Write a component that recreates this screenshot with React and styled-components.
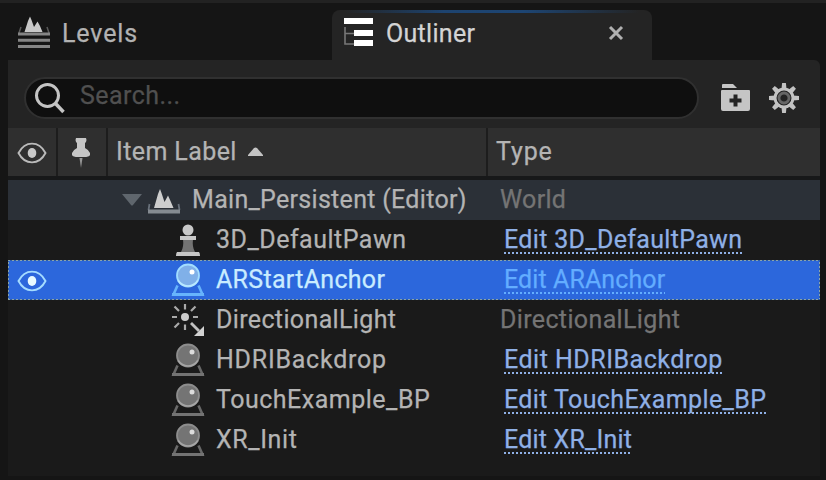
import React from "react";
import styled, { createGlobalStyle } from "styled-components";

const GlobalStyle = createGlobalStyle`
  * { box-sizing: border-box; }
  body { margin: 0; background: #151515; overflow: hidden; }
`;

const Window = styled.main`
  width: 826px;
  height: 480px;
  padding: 0 6px 4px 8px;
  border-top: 3px solid #222222;
  background: #151515;
  color: #b4b4b4;
  font: 400 25px/30px Roboto, sans-serif;
  -webkit-text-stroke: 0.25px currentColor;
  display: flex;
  flex-direction: column;
`;

const TabBar = styled.nav`
  display: flex;
  align-items: flex-end;
  height: 57px;
  flex: none;
`;

const Tab = styled.div`
  display: flex;
  align-items: center;
  width: ${(p) => (p.$active ? 320 : 324)}px;
  height: 50px;
  padding: ${(p) => (p.$active ? "0 28px 4px 12px" : "0 10px 4px 9px")};
  border-radius: 8px 8px 0 0;
  color: ${(p) => (p.$active ? "#d4d4d4" : "#b2b2b2")};
  background: ${(p) =>
    p.$active
      ? "linear-gradient(90deg, #242424 4%, #1d436f 35%, #1d4573 60%, #242424 96%) top / 100% 3px no-repeat, #242424"
      : "transparent"};
`;

const Label = styled.span`
  white-space: pre;
  letter-spacing: ${(p) => p.$spacing || 0}px;
`;

const TabLabel = styled(Label)`
  flex: 1;
  margin-left: ${(p) => p.$gap}px;
  padding-top: 2px;
`;

const Panel = styled.section`
  flex: 1;
  display: flex;
  flex-direction: column;
  background: #1a1a1a;
  border-radius: 0 6px 0 0;
  overflow: hidden;
`;

const Toolbar = styled.div`
  height: 68px;
  flex: none;
  display: flex;
  align-items: center;
  padding: 8px 18px 0 16px;
  background: #242424;
`;

const SearchBox = styled.div`
  width: 675px;
  height: 42px;
  border: 2px solid #303030;
  border-radius: 21px;
  background: #0f0f0f;
  color: #505050;
  display: flex;
  align-items: center;
  padding: 0 0 1px 8px;
  margin-right: 22px;
`;

const SearchText = styled(Label)`
  margin-left: 14px;
  padding-bottom: 3px;
`;

const ToolIcon = styled.span`
  display: flex;
  margin-right: ${(p) => p.$gap || 0}px;
`;

const Columns = styled.div`
  display: grid;
  grid-template-columns: 50px 50px 380px 332px;
`;

const Header = styled(Columns)`
  height: 52px;
  flex: none;
  background: #2f2f2f;
  border-bottom: 4px solid #171819;
`;

const HeaderCell = styled.div`
  display: flex;
  align-items: center;
  padding: ${(p) => (p.$icon ? 2 : 0)}px 0 0 ${(p) => p.$inset}px;
  border-right: ${(p) => (p.$last ? 0 : 2)}px solid #1d1d1d;
`;

const SortArrow = styled.span`
  display: flex;
  margin-left: 11px;
`;

const Row = styled(Columns)`
  height: 40px;
  color: ${(p) => (p.$selected ? "#c9ecff" : "#b4b4b4")};
  background: ${(p) => (p.$selected ? "#2c67dc" : p.$world ? "#2b3037" : "transparent")};
  ${(p) => p.$selected && `
    background:
      repeating-linear-gradient(90deg, #8ba4a8 0 2px, #2c5cab 2px 4px) top / 100% 1px no-repeat,
      repeating-linear-gradient(90deg, #8ba4a8 0 2px, #2c5cab 2px 4px) bottom / 100% 1px no-repeat,
      repeating-linear-gradient(0deg, #8ba4a8 0 2px, #2c5cab 2px 4px) left / 1px 100% no-repeat,
      repeating-linear-gradient(0deg, #8ba4a8 0 2px, #2c5cab 2px 4px) right / 1px 100% no-repeat,
      #2c67dc;
  `}
`;

const VisibilityCell = styled.div`
  display: flex;
  align-items: center;
  padding: 2px 0 0 9px;
`;

const ItemCell = styled.div`
  grid-column: 3;
  display: flex;
  align-items: center;
  padding: 0 0 0 ${(p) => (p.$world ? 13 : 62)}px;
`;

const ItemLabel = styled(Label)`
  padding-bottom: 1px;
`;

const ItemIcon = styled.span`
  display: flex;
  width: 36px;
  height: 36px;
  margin-right: 10px;
`;

const Disclosure = styled.span`
  display: flex;
  width: 22px;
  margin-right: 3px;
`;

const TypeCell = styled.div`
  display: flex;
  align-items: center;
  padding: 0 0 1px ${(p) => (p.$link ? 16 : 12)}px;
  color: #747474;
`;

const TypeLink = styled.a`
  white-space: pre;
  letter-spacing: ${(p) => p.$spacing || 0}px;
  color: ${(p) => (p.$selected ? "#63adff" : "#8fb0e6")};
  line-height: 28px;
  margin-top: 1px;
  background: repeating-linear-gradient(90deg, currentColor 0 2px, transparent 2px 4px) bottom / 100% 2px no-repeat;
`;

const LevelsIcon = () => (
  <svg width="34" height="34" viewBox="0 0 34 34">
    <path d="M7.500 16 11 5 13 0.500 14.500 4 17 11 20.500 5.500 23 10 25.500 16Z" fill="#c8c8c8" />
    <path d="M4 11 2 17M30 11 32 17" fill="none" stroke="#5a5a5a" strokeWidth="1.500" />
    <path d="M1 18H33M1 24.200H33M1 30.400H33" stroke="#858585" strokeWidth="3" />
  </svg>
);

const OutlinerIcon = () => (
  <svg width="29" height="30" viewBox="0 0 29 30">
    <path d="M1 9V26H10M1 15.500H10" fill="none" stroke="#777" strokeWidth="1.600" />
    <path d="M0 0H29V6H0ZM10 12H29V18H10ZM10 22H29V28H10Z" fill="#fff" />
  </svg>
);

const CloseIcon = () => (
  <svg width="16" height="18" viewBox="0 0 16 18">
    <path d="M2 3 14 15M14 3 2 15" stroke="#b0b0b0" strokeWidth="3" />
  </svg>
);

const SearchIcon = () => (
  <svg width="32" height="32" viewBox="0 0 32 32" fill="none" stroke="#c4c4c4">
    <circle cx="13.500" cy="13.500" r="11" strokeWidth="3" />
    <path d="m21.500 21.500 8 8.500" strokeWidth="3.500" />
  </svg>
);

const FolderAddIcon = () => (
  <svg width="29" height="28" viewBox="0 0 29 28">
    <path d="M1 4V1Q1 0 2 0H12L16 4ZM1 6H28Q29 6 29 7V25Q29 27 27 27H2Q0 27 0 25V7Q0 6 1 6Z" fill="#c5c5c5" />
    <path d="M14.500 10.500V22.500M8.500 16.500H20.500" stroke="#242424" strokeWidth="4" />
  </svg>
);

const GearIcon = () => (
  <svg width="32" height="32" viewBox="-17 -16 32 32">
    {[0, 45, 90, 135, 180, 225, 270, 315].map((angle) => (
      <path key={angle} d="M-2.500-9 -1.900-15H1.900L2.500-9Z" fill="#c2c2c2" transform={`rotate(${angle})`} />
    ))}
    <circle r="9" fill="#242424" stroke="#c2c2c2" strokeWidth="3" />
    <circle r="5" fill="#242424" stroke="#666" strokeWidth="2.800" />
  </svg>
);

const EyeIcon = ({ color = "#bababa", pupil = "#c8c8c8" }) => (
  <svg width="30" height="22" viewBox="0 0 30 22">
    <path d="M1.500 11C8-1.500 22-1.500 28.500 11 22 23.500 8 23.500 1.500 11Z" fill="none" stroke={color} strokeWidth="1.900" />
    <ellipse cx="15" cy="11" rx="4.300" ry="4.900" fill={pupil} />
  </svg>
);

const PinIcon = () => (
  <svg width="18" height="32" viewBox="0 0 18 32">
    <path d="M4 1H14Q15 3 14 5L13 6V11Q17 13 18 16V18Q17 20 12 20H6Q1 20 0 18V16Q1 13 5 11V6L4 5Q3 3 4 1Z" fill="#c6c6c6" />
    <path d="M7.500 21H10.500L9 31Z" fill="#969696" />
  </svg>
);

const UpArrow = () => (
  <svg width="15" height="10" viewBox="0 0 15 10">
    <path d="M0 8 6 1Q7.500 0 9 1L15 8V9H0Z" fill="#c4c4c4" />
  </svg>
);

const DownArrow = () => (
  <svg width="22" height="14" viewBox="0 0 22 14">
    <path d="M1 1H21L12 12Q11 13 10 12Z" fill="#5f666d" />
  </svg>
);

const WorldIcon = () => (
  <svg width="36" height="36" viewBox="0 0 36 36">
    <path d="M8 26 12 12 14 7 15.500 11 18.500 20 22 13.500 24.500 19 27.500 26Z" fill="#cdcdcd" />
    <path d="M3.500 22 2.500 28M32.500 22 33.500 28" stroke="#68707a" strokeWidth="1.800" />
    <path d="M2 27.500H34V31.500H2Z" fill="#858b91" />
  </svg>
);

const PawnIcon = () => (
  <svg width="36" height="36" viewBox="0 0 36 36">
    <path d="M13 17H23Q22 25 25 30H11Q14 25 13 17Z" fill="#737373" />
    <circle cx="18" cy="8" r="5.500" fill="#c7c7c7" />
    <path d="M10 14H26V18H10ZM7 30H29Q30 31 30 34H6Q6 31 7 30Z" fill="#c7c7c7" />
  </svg>
);

const ActorIcon = ({ selected }) => (
  <svg width="36" height="36" viewBox="0 0 36 36">
    <path d="M7.500 23.500 3.500 32.500H32.500L28.500 23.500" fill="none" stroke={selected ? "#67b4fc" : "#696969"} strokeWidth="2.600" />
    <path d="M2 31H34V34H2Z" fill={selected ? "#67b4fc" : "#737373"} />
    <circle cx="18" cy="13.500" r="11" fill={selected ? "#80b0e8" : "#747474"} stroke={selected ? "#a2ddff" : "#8d8d8d"} strokeWidth="1.800" />
    <path d="M8 18.500Q12 24 18 24T28 18.500" fill="none" stroke={selected ? "#b8e8ff" : "#a5a5a5"} strokeWidth="1.700" />
    <circle cx="22" cy="10" r="2.500" fill={selected ? "#fff" : "#dddddd"} />
  </svg>
);

const LightIcon = () => (
  <svg width="36" height="36" viewBox="0 0 36 36">
    <circle cx="15" cy="15" r="4" fill="#cdcdcd" />
    <path d="M15 2V7.500M15 22.500V28M2 15H7M23 15H28M4.500 4.500 9 9M25.500 4.500 21 9M4.500 25.500 9 21" stroke="#aaa" strokeWidth="2.200" />
    <path d="M21 21 29 29" stroke="#c2c2c2" strokeWidth="2.800" />
    <path d="M34 24V34H24Z" fill="#d2d2d2" />
  </svg>
);

const icons = { world: WorldIcon, pawn: PawnIcon, actor: ActorIcon, light: LightIcon };

const items = [
  { name: "Main_Persistent (Editor)", nameSpacing: 0.3, type: "World", typeSpacing: 0.3, icon: "world" },
  { name: "3D_DefaultPawn", nameSpacing: 0.5, type: "Edit 3D_DefaultPawn", typeSpacing: 0.33, icon: "pawn", link: true },
  { name: "ARStartAnchor", nameSpacing: 0.3, type: "Edit ARAnchor", typeSpacing: 0.1, icon: "actor", link: true, selected: true },
  { name: "DirectionalLight", nameSpacing: 0.36, type: "DirectionalLight", typeSpacing: 0.36, icon: "light" },
  { name: "HDRIBackdrop", nameSpacing: 0.75, type: "Edit HDRIBackdrop", typeSpacing: 0.5, icon: "actor", link: true },
  { name: "TouchExample_BP", nameSpacing: 0.5, type: "Edit TouchExample_BP", typeSpacing: 0.38, icon: "actor", link: true },
  { name: "XR_Init", nameSpacing: 0.6, type: "Edit XR_Init", typeSpacing: 0.2, icon: "actor", link: true },
];

function OutlinerRow({ item }) {
  const Icon = icons[item.icon];
  const world = item.icon === "world";
  return (
    <Row $world={world} $selected={item.selected}>
      <VisibilityCell>
        {item.selected && <EyeIcon color="#a5dcff" pupil="#e8faff" />}
      </VisibilityCell>
      <ItemCell $world={world}>
        {world && <Disclosure><DownArrow /></Disclosure>}
        <ItemIcon><Icon selected={item.selected} /></ItemIcon>
        <ItemLabel $spacing={item.nameSpacing}>{item.name}</ItemLabel>
      </ItemCell>
      <TypeCell $link={item.link}>
        {item.link
          ? <TypeLink $selected={item.selected} $spacing={item.typeSpacing}>{item.type}</TypeLink>
          : <Label $spacing={item.typeSpacing}>{item.type}</Label>}
      </TypeCell>
    </Row>
  );
}

export default function App() {
  return (
    <>
      <GlobalStyle />
      <Window>
        <TabBar>
          <Tab>
            <LevelsIcon />
            <TabLabel $gap={11} $spacing={0.9}>Levels</TabLabel>
          </Tab>
          <Tab $active>
            <OutlinerIcon />
            <TabLabel $gap={13} $spacing={0.3}>Outliner</TabLabel>
            <CloseIcon />
          </Tab>
        </TabBar>
        <Panel>
          <Toolbar>
            <SearchBox>
              <SearchIcon />
              <SearchText $spacing={0.45}>Search...</SearchText>
            </SearchBox>
            <ToolIcon $gap={17}><FolderAddIcon /></ToolIcon>
            <ToolIcon><GearIcon /></ToolIcon>
          </Toolbar>
          <Header>
            <HeaderCell $icon $inset={9}><EyeIcon /></HeaderCell>
            <HeaderCell $icon $inset={14}><PinIcon /></HeaderCell>
            <HeaderCell $inset={8}>
              <Label $spacing={0.4}>Item Label</Label>
              <SortArrow><UpArrow /></SortArrow>
            </HeaderCell>
            <HeaderCell $inset={8} $last><Label $spacing={0.9}>Type</Label></HeaderCell>
          </Header>
          {items.map((item) => <OutlinerRow key={item.name} item={item} />)}
        </Panel>
      </Window>
    </>
  );
}
